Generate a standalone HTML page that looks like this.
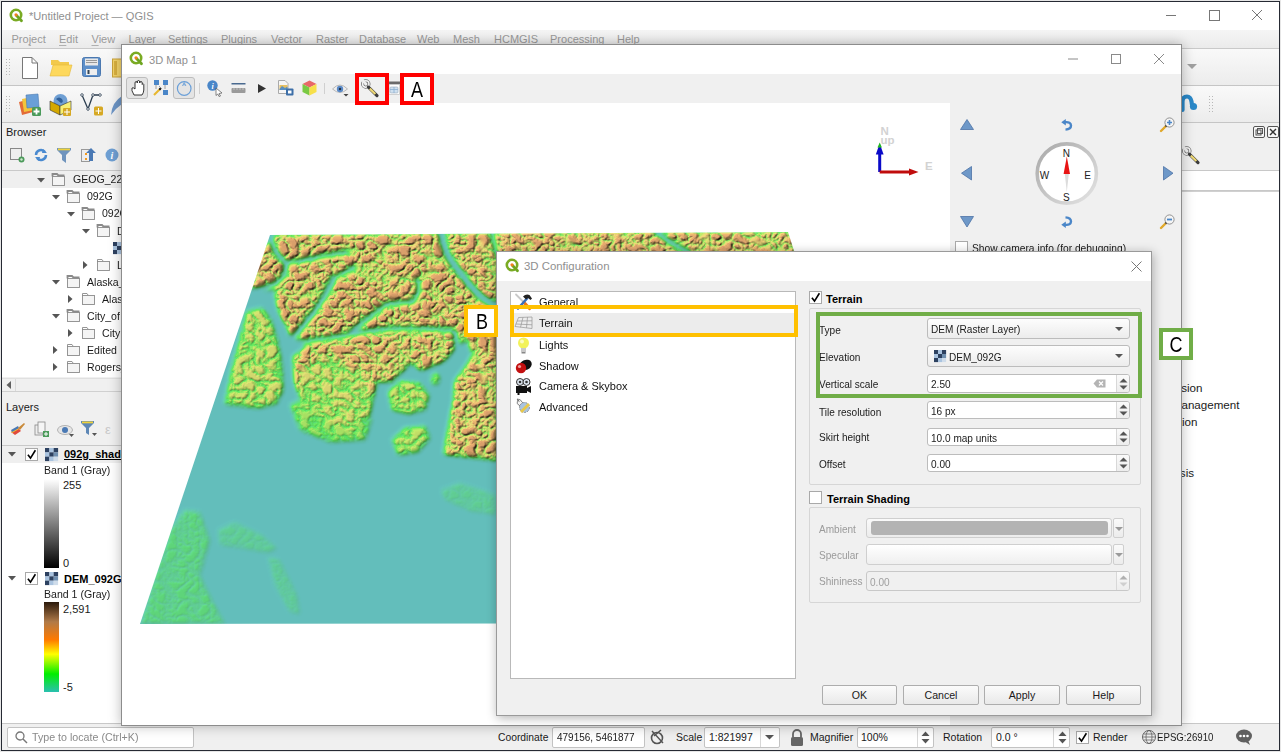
<!DOCTYPE html>
<html><head><meta charset="utf-8"><style>
html,body{margin:0;padding:0;}
body{width:1281px;height:752px;position:relative;overflow:hidden;background:#dedede;font-family:"Liberation Sans", sans-serif;}
div{position:absolute;box-sizing:border-box;}
svg{overflow:visible;}
</style></head><body>
<div style="left:0px;top:0px;width:1281px;height:752px;background:#e6e6e6;"></div>
<div style="left:1px;top:1px;width:1279px;height:750px;background:#f0f0f0;border:1px solid #262a33;"></div>
<div style="left:2px;top:2px;width:1277px;height:28px;background:#fff;"></div>
<svg style="position:absolute;left:9px;top:8px;" width="15" height="15" viewBox="0 0 15 15"><g transform="scale(1.0)">
<circle cx="7" cy="7" r="5.2" fill="none" stroke="#7aab23" stroke-width="2.6"/>
<line x1="7.5" y1="7.5" x2="12.5" y2="12.8" stroke="#6ea520" stroke-width="2.8" stroke-linecap="round"/>
<circle cx="7" cy="6.8" r="1.6" fill="#f07f1e"/></g></svg>
<div style="left:29px;top:8.0px;font-size:11.1px;line-height:16px;color:#8f8f8f;white-space:nowrap;">*Untitled Project — QGIS</div>
<svg style="position:absolute;left:1160px;top:8px;" width="110" height="16" viewBox="0 0 110 16"><line x1="6" y1="7.5" x2="16" y2="7.5" stroke="#777" stroke-width="1"/>
<rect x="49.5" y="2.5" width="10" height="10" fill="none" stroke="#777" stroke-width="1"/>
<path d="M92 2 L102 12 M102 2 L92 12" stroke="#777" stroke-width="1"/></svg>
<div style="left:2px;top:30px;width:1277px;height:19px;background:linear-gradient(#f5f5f5,#ebebeb);border-bottom:1px solid #c9c9c9;"></div>
<div style="left:11.5px;top:32.0px;font-size:11px;line-height:15px;color:#9a9a9a;white-space:nowrap;">Pro<u style="text-decoration-color:#b0b0b0;text-underline-offset:1.5px;">j</u>ect</div>
<div style="left:59px;top:32.0px;font-size:11px;line-height:15px;color:#9a9a9a;white-space:nowrap;"><u style="text-decoration-color:#b0b0b0;text-underline-offset:1.5px;">E</u>dit</div>
<div style="left:91.5px;top:32.0px;font-size:11px;line-height:15px;color:#9a9a9a;white-space:nowrap;"><u style="text-decoration-color:#b0b0b0;text-underline-offset:1.5px;">V</u>iew</div>
<div style="left:128.5px;top:32.0px;font-size:11px;line-height:15px;color:#9a9a9a;white-space:nowrap;"><u style="text-decoration-color:#b0b0b0;text-underline-offset:1.5px;">L</u>ayer</div>
<div style="left:168px;top:32.0px;font-size:11px;line-height:15px;color:#9a9a9a;white-space:nowrap;"><u style="text-decoration-color:#b0b0b0;text-underline-offset:1.5px;">S</u>ettings</div>
<div style="left:221px;top:32.0px;font-size:11px;line-height:15px;color:#9a9a9a;white-space:nowrap;"><u style="text-decoration-color:#b0b0b0;text-underline-offset:1.5px;">P</u>lugins</div>
<div style="left:271px;top:32.0px;font-size:11px;line-height:15px;color:#9a9a9a;white-space:nowrap;">Vect<u style="text-decoration-color:#b0b0b0;text-underline-offset:1.5px;">o</u>r</div>
<div style="left:316px;top:32.0px;font-size:11px;line-height:15px;color:#9a9a9a;white-space:nowrap;"><u style="text-decoration-color:#b0b0b0;text-underline-offset:1.5px;">R</u>aster</div>
<div style="left:359px;top:32.0px;font-size:11px;line-height:15px;color:#9a9a9a;white-space:nowrap;"><u style="text-decoration-color:#b0b0b0;text-underline-offset:1.5px;">D</u>atabase</div>
<div style="left:417px;top:32.0px;font-size:11px;line-height:15px;color:#9a9a9a;white-space:nowrap;"><u style="text-decoration-color:#b0b0b0;text-underline-offset:1.5px;">W</u>eb</div>
<div style="left:453px;top:32.0px;font-size:11px;line-height:15px;color:#9a9a9a;white-space:nowrap;"><u style="text-decoration-color:#b0b0b0;text-underline-offset:1.5px;">M</u>esh</div>
<div style="left:494px;top:32.0px;font-size:11px;line-height:15px;color:#9a9a9a;white-space:nowrap;">HCMGIS</div>
<div style="left:550px;top:32.0px;font-size:11px;line-height:15px;color:#9a9a9a;white-space:nowrap;">Pro<u style="text-decoration-color:#b0b0b0;text-underline-offset:1.5px;">c</u>essing</div>
<div style="left:617px;top:32.0px;font-size:11px;line-height:15px;color:#9a9a9a;white-space:nowrap;"><u style="text-decoration-color:#b0b0b0;text-underline-offset:1.5px;">H</u>elp</div>
<div style="left:2px;top:49px;width:1277px;height:37px;background:linear-gradient(#f9f9f9,#ececec);border-bottom:1px solid #c5c5c5;"></div>
<div style="left:2px;top:86px;width:1277px;height:37px;background:linear-gradient(#f9f9f9,#ececec);border-bottom:1px solid #c5c5c5;"></div>
<svg style="position:absolute;left:6px;top:59px;" width="6" height="18" viewBox="0 0 6 18"><rect x="0" y="0" width="1" height="1" fill="#b8b8b8"/><rect x="3" y="0" width="1" height="1" fill="#b8b8b8"/><rect x="0" y="3" width="1" height="1" fill="#b8b8b8"/><rect x="3" y="3" width="1" height="1" fill="#b8b8b8"/><rect x="0" y="6" width="1" height="1" fill="#b8b8b8"/><rect x="3" y="6" width="1" height="1" fill="#b8b8b8"/><rect x="0" y="9" width="1" height="1" fill="#b8b8b8"/><rect x="3" y="9" width="1" height="1" fill="#b8b8b8"/><rect x="0" y="12" width="1" height="1" fill="#b8b8b8"/><rect x="3" y="12" width="1" height="1" fill="#b8b8b8"/><rect x="0" y="15" width="1" height="1" fill="#b8b8b8"/><rect x="3" y="15" width="1" height="1" fill="#b8b8b8"/></svg>
<svg style="position:absolute;left:6px;top:96px;" width="6" height="18" viewBox="0 0 6 18"><rect x="0" y="0" width="1" height="1" fill="#b8b8b8"/><rect x="3" y="0" width="1" height="1" fill="#b8b8b8"/><rect x="0" y="3" width="1" height="1" fill="#b8b8b8"/><rect x="3" y="3" width="1" height="1" fill="#b8b8b8"/><rect x="0" y="6" width="1" height="1" fill="#b8b8b8"/><rect x="3" y="6" width="1" height="1" fill="#b8b8b8"/><rect x="0" y="9" width="1" height="1" fill="#b8b8b8"/><rect x="3" y="9" width="1" height="1" fill="#b8b8b8"/><rect x="0" y="12" width="1" height="1" fill="#b8b8b8"/><rect x="3" y="12" width="1" height="1" fill="#b8b8b8"/><rect x="0" y="15" width="1" height="1" fill="#b8b8b8"/><rect x="3" y="15" width="1" height="1" fill="#b8b8b8"/></svg>
<svg style="position:absolute;left:22px;top:57px;" width="16" height="22" viewBox="0 0 16 22"><path d="M0.5 0.5 H10 L15.5 6 V21.5 H0.5 Z" fill="#fff" stroke="#777"/><path d="M10 0.5 V6 H15.5" fill="none" stroke="#777"/></svg>
<svg style="position:absolute;left:50px;top:58px;" width="22" height="19" viewBox="0 0 22 19"><path d="M1 2 H8 L10 4 H19 V7 H1 Z" fill="#f2c94c"/><path d="M3 7 H22 L19 18 H0 Z" fill="#fdd85d" stroke="#e4b93a" stroke-width="0.6"/></svg>
<svg style="position:absolute;left:82px;top:57px;" width="19" height="20" viewBox="0 0 19 20"><rect x="0.5" y="0.5" width="18" height="19" rx="2" fill="#5d8fc9" stroke="#4a78b0"/><rect x="3" y="1.5" width="13" height="7" fill="#e8e8e8"/><rect x="4" y="3" width="11" height="1" fill="#999"/><rect x="4" y="5" width="11" height="1" fill="#999"/><rect x="4" y="12" width="11" height="6" fill="#eee"/><rect x="5.5" y="13" width="2" height="4" fill="#345"/></svg>
<svg style="position:absolute;left:112px;top:58px;" width="10" height="21" viewBox="0 0 10 21"><rect x="0.5" y="1" width="10" height="18" fill="#f4d46a" stroke="#c9a23a"/><rect x="2" y="3" width="3" height="14" fill="#d9b040"/></svg>
<svg style="position:absolute;left:18px;top:93px;" width="24" height="23" viewBox="0 0 24 23"><path d="M1 9 L12 6 L15 19 L4 22 Z" fill="#e36b37"/><path d="M4 6 L14 4 L16 17 L6 19 Z" fill="#f3c53b"/><path d="M8 2 L20 1 L21 14 L9 15 Z" fill="#6a9fd8" stroke="#4a78b0" stroke-width="0.6"/><rect x="14" y="14" width="9" height="9" rx="1.5" fill="#4b9a5a"/><path d="M18.5 15.5 V21.5 M15.5 18.5 H21.5" stroke="#fff" stroke-width="1.8"/></svg>
<svg style="position:absolute;left:49px;top:93px;" width="24" height="23" viewBox="0 0 24 23"><circle cx="11.5" cy="8" r="7" fill="#6f9fd3"/><path d="M7 6 Q10 3 13 6 Q15 9 12 10 Z" fill="#2f5f9a"/><path d="M1 8 L11 13 V22 L1 17 Z" fill="#d4a800" stroke="#333" stroke-width="0.6"/><path d="M11 13 L22 8 V17 L11 22 Z" fill="#f7ef73" stroke="#333" stroke-width="0.6"/><rect x="14" y="15" width="8" height="8" rx="1" fill="#d6a823"/><path d="M18 16 V22 M15 19 H21" stroke="#fff" stroke-width="1"/></svg>
<svg style="position:absolute;left:80px;top:93px;" width="24" height="23" viewBox="0 0 24 23"><path d="M2 2 L8 16 L13 2 H20" fill="none" stroke="#2c3e50" stroke-width="1.3"/><circle cx="2" cy="2" r="1.3" fill="#fff" stroke="#2c3e50" stroke-width="0.8"/><circle cx="13" cy="2" r="1.3" fill="#fff" stroke="#2c3e50" stroke-width="0.8"/><circle cx="20" cy="2" r="1.3" fill="#fff" stroke="#2c3e50" stroke-width="0.8"/><circle cx="8" cy="16" r="1.3" fill="#fff" stroke="#2c3e50" stroke-width="0.8"/><rect x="14" y="13.5" width="9" height="9" rx="1.5" fill="#d6a823"/><path d="M18.5 15 V21 M15.5 18 H21.5" stroke="#fff" stroke-width="1"/></svg>
<svg style="position:absolute;left:110px;top:96px;" width="12" height="20" viewBox="0 0 12 20"><path d="M12 0 Q2 6 1 19 Q6 12 12 8 Z" fill="#6d95c6"/></svg>
<div style="left:2px;top:123px;width:119px;height:270px;background:#f0f0f0;"></div>
<div style="left:6px;top:124.5px;font-size:11px;line-height:15px;color:#1a1a1a;white-space:nowrap;">Browser</div>
<svg style="position:absolute;left:10px;top:148px;" width="15" height="15" viewBox="0 0 15 15"><rect x="0.5" y="0.5" width="11" height="11" fill="#eee" stroke="#888"/><circle cx="11.5" cy="11.5" r="3" fill="#4b9a5a"/><circle cx="11.5" cy="11.5" r="1.2" fill="#cfe8cf"/></svg>
<svg style="position:absolute;left:34px;top:148px;" width="14" height="14" viewBox="0 0 14 14"><path d="M2 7 A5 5 0 0 1 11 4" fill="none" stroke="#4a8ad0" stroke-width="2.5"/><path d="M12 7 A5 5 0 0 1 3 10" fill="none" stroke="#4a8ad0" stroke-width="2.5"/><path d="M9 1 L13 5 L8 5 Z" fill="#4a8ad0"/><path d="M5 13 L1 9 L6 9 Z" fill="#4a8ad0"/></svg>
<svg style="position:absolute;left:57px;top:148px;" width="14" height="15" viewBox="0 0 14 15"><path d="M0 0 H14 V2 L9 7 V15 L5 12 V7 L0 2 Z" fill="#6f94bd"/><rect x="1" y="0.5" width="12" height="1.8" fill="#f0d23a"/></svg>
<svg style="position:absolute;left:81px;top:148px;" width="15" height="14" viewBox="0 0 15 14"><rect x="0.5" y="1.5" width="8" height="12" fill="#eee" stroke="#999"/><rect x="4" y="5" width="2" height="2" fill="#f39a1e"/><rect x="4" y="10" width="2" height="2" fill="#f39a1e"/><path d="M10 0 L15 5 H12 V13 H8 V5 H5 Z" fill="#4a79b4"/></svg>
<svg style="position:absolute;left:105px;top:148px;" width="14" height="14" viewBox="0 0 14 14"><circle cx="7" cy="7" r="6.5" fill="#6e9fd3"/><text x="7" y="11" font-size="10" font-style="italic" font-weight="bold" fill="#fff" text-anchor="middle" font-family="Liberation Serif">i</text></svg>
<div style="left:2px;top:170px;width:119px;height:1px;background:#c9c9c9;"></div>
<div style="left:2px;top:171px;width:119px;height:206px;background:#fff;"></div>
<div style="left:2px;top:171px;width:119px;height:17px;background:#efefef;"></div>
<svg style="position:absolute;left:37px;top:177.5px;" width="8" height="5" viewBox="0 0 8 5"><path d="M0 0 H8 L4 4.5 Z" fill="#555"/></svg>
<svg style="position:absolute;left:52px;top:172.5px;" width="13" height="13" viewBox="0 0 13 13"><rect x="0.5" y="3.5" width="12" height="9" fill="#f4f4f4" stroke="#8a8a8a" stroke-width="0.9"/><path d="M0.5 3.5 V1 H5 L6.5 2.5 H12.5" fill="none" stroke="#8a8a8a" stroke-width="1.8"/></svg>
<div style="left:72.5px;top:172.0px;font-size:11px;line-height:15px;color:#1a1a1a;transform:scaleX(0.96);transform-origin:0 50%;white-space:nowrap;">GEOG_221</div>
<svg style="position:absolute;left:52px;top:194.6px;" width="8" height="5" viewBox="0 0 8 5"><path d="M0 0 H8 L4 4.5 Z" fill="#555"/></svg>
<svg style="position:absolute;left:67px;top:189.6px;" width="13" height="13" viewBox="0 0 13 13"><rect x="0.5" y="3.5" width="12" height="9" fill="#f4f4f4" stroke="#8a8a8a" stroke-width="0.9"/><path d="M0.5 3.5 V1 H5 L6.5 2.5 H12.5" fill="none" stroke="#8a8a8a" stroke-width="1.8"/></svg>
<div style="left:87px;top:189.1px;font-size:11px;line-height:15px;color:#1a1a1a;transform:scaleX(0.96);transform-origin:0 50%;white-space:nowrap;">092G</div>
<svg style="position:absolute;left:67px;top:211.9px;" width="8" height="5" viewBox="0 0 8 5"><path d="M0 0 H8 L4 4.5 Z" fill="#555"/></svg>
<svg style="position:absolute;left:82px;top:206.9px;" width="13" height="13" viewBox="0 0 13 13"><rect x="0.5" y="3.5" width="12" height="9" fill="#f4f4f4" stroke="#8a8a8a" stroke-width="0.9"/><path d="M0.5 3.5 V1 H5 L6.5 2.5 H12.5" fill="none" stroke="#8a8a8a" stroke-width="1.8"/></svg>
<div style="left:102px;top:206.4px;font-size:11px;line-height:15px;color:#1a1a1a;transform:scaleX(0.96);transform-origin:0 50%;white-space:nowrap;">092G</div>
<svg style="position:absolute;left:82px;top:229px;" width="8" height="5" viewBox="0 0 8 5"><path d="M0 0 H8 L4 4.5 Z" fill="#555"/></svg>
<svg style="position:absolute;left:97px;top:224px;" width="13" height="13" viewBox="0 0 13 13"><rect x="0.5" y="3.5" width="12" height="9" fill="#f4f4f4" stroke="#8a8a8a" stroke-width="0.9"/><path d="M0.5 3.5 V1 H5 L6.5 2.5 H12.5" fill="none" stroke="#8a8a8a" stroke-width="1.8"/></svg>
<div style="left:117px;top:223.5px;font-size:11px;line-height:15px;color:#1a1a1a;transform:scaleX(0.96);transform-origin:0 50%;white-space:nowrap;">D</div>
<svg style="position:absolute;left:83px;top:261px;" width="5" height="8" viewBox="0 0 5 8"><path d="M0 0 V8 L4.5 4 Z" fill="#555"/></svg>
<svg style="position:absolute;left:97px;top:258px;" width="13" height="13" viewBox="0 0 13 13"><rect x="0.5" y="3.5" width="12" height="9" fill="#f4f4f4" stroke="#8a8a8a" stroke-width="0.9"/><path d="M0.5 3.5 V1.5 H5 L6 3" fill="none" stroke="#8a8a8a" stroke-width="0.9"/></svg>
<div style="left:117px;top:257.5px;font-size:11px;line-height:15px;color:#1a1a1a;transform:scaleX(0.96);transform-origin:0 50%;white-space:nowrap;">L</div>
<svg style="position:absolute;left:52px;top:280px;" width="8" height="5" viewBox="0 0 8 5"><path d="M0 0 H8 L4 4.5 Z" fill="#555"/></svg>
<svg style="position:absolute;left:67px;top:275px;" width="13" height="13" viewBox="0 0 13 13"><rect x="0.5" y="3.5" width="12" height="9" fill="#f4f4f4" stroke="#8a8a8a" stroke-width="0.9"/><path d="M0.5 3.5 V1 H5 L6.5 2.5 H12.5" fill="none" stroke="#8a8a8a" stroke-width="1.8"/></svg>
<div style="left:87px;top:274.5px;font-size:11px;line-height:15px;color:#1a1a1a;transform:scaleX(0.96);transform-origin:0 50%;white-space:nowrap;">Alaska_</div>
<svg style="position:absolute;left:68px;top:295px;" width="5" height="8" viewBox="0 0 5 8"><path d="M0 0 V8 L4.5 4 Z" fill="#555"/></svg>
<svg style="position:absolute;left:82px;top:292px;" width="13" height="13" viewBox="0 0 13 13"><rect x="0.5" y="3.5" width="12" height="9" fill="#f4f4f4" stroke="#8a8a8a" stroke-width="0.9"/><path d="M0.5 3.5 V1.5 H5 L6 3" fill="none" stroke="#8a8a8a" stroke-width="0.9"/></svg>
<div style="left:102px;top:291.5px;font-size:11px;line-height:15px;color:#1a1a1a;transform:scaleX(0.96);transform-origin:0 50%;white-space:nowrap;">Alas</div>
<svg style="position:absolute;left:52px;top:314px;" width="8" height="5" viewBox="0 0 8 5"><path d="M0 0 H8 L4 4.5 Z" fill="#555"/></svg>
<svg style="position:absolute;left:67px;top:309px;" width="13" height="13" viewBox="0 0 13 13"><rect x="0.5" y="3.5" width="12" height="9" fill="#f4f4f4" stroke="#8a8a8a" stroke-width="0.9"/><path d="M0.5 3.5 V1 H5 L6.5 2.5 H12.5" fill="none" stroke="#8a8a8a" stroke-width="1.8"/></svg>
<div style="left:87px;top:308.5px;font-size:11px;line-height:15px;color:#1a1a1a;transform:scaleX(0.96);transform-origin:0 50%;white-space:nowrap;">City_of</div>
<svg style="position:absolute;left:68px;top:329px;" width="5" height="8" viewBox="0 0 5 8"><path d="M0 0 V8 L4.5 4 Z" fill="#555"/></svg>
<svg style="position:absolute;left:82px;top:326px;" width="13" height="13" viewBox="0 0 13 13"><rect x="0.5" y="3.5" width="12" height="9" fill="#f4f4f4" stroke="#8a8a8a" stroke-width="0.9"/><path d="M0.5 3.5 V1.5 H5 L6 3" fill="none" stroke="#8a8a8a" stroke-width="0.9"/></svg>
<div style="left:102px;top:325.5px;font-size:11px;line-height:15px;color:#1a1a1a;transform:scaleX(0.96);transform-origin:0 50%;white-space:nowrap;">City</div>
<svg style="position:absolute;left:53px;top:346px;" width="5" height="8" viewBox="0 0 5 8"><path d="M0 0 V8 L4.5 4 Z" fill="#555"/></svg>
<svg style="position:absolute;left:67px;top:343px;" width="13" height="13" viewBox="0 0 13 13"><rect x="0.5" y="3.5" width="12" height="9" fill="#f4f4f4" stroke="#8a8a8a" stroke-width="0.9"/><path d="M0.5 3.5 V1.5 H5 L6 3" fill="none" stroke="#8a8a8a" stroke-width="0.9"/></svg>
<div style="left:87px;top:342.5px;font-size:11px;line-height:15px;color:#1a1a1a;transform:scaleX(0.96);transform-origin:0 50%;white-space:nowrap;">Edited</div>
<svg style="position:absolute;left:53px;top:363px;" width="5" height="8" viewBox="0 0 5 8"><path d="M0 0 V8 L4.5 4 Z" fill="#555"/></svg>
<svg style="position:absolute;left:67px;top:360px;" width="13" height="13" viewBox="0 0 13 13"><rect x="0.5" y="3.5" width="12" height="9" fill="#f4f4f4" stroke="#8a8a8a" stroke-width="0.9"/><path d="M0.5 3.5 V1.5 H5 L6 3" fill="none" stroke="#8a8a8a" stroke-width="0.9"/></svg>
<div style="left:87px;top:359.5px;font-size:11px;line-height:15px;color:#1a1a1a;transform:scaleX(0.96);transform-origin:0 50%;white-space:nowrap;">Rogers_</div>
<svg style="position:absolute;left:113px;top:242px;" width="12" height="12" viewBox="0 0 12 12"><rect x="0.00" y="0.00" width="4.10" height="4.10" fill="#2d4160"/><rect x="4.00" y="0.00" width="4.10" height="4.10" fill="#a9c3df"/><rect x="8.00" y="0.00" width="4.10" height="4.10" fill="#2d4160"/><rect x="0.00" y="4.00" width="4.10" height="4.10" fill="#a9c3df"/><rect x="4.00" y="4.00" width="4.10" height="4.10" fill="#2d4160"/><rect x="8.00" y="4.00" width="4.10" height="4.10" fill="#6f8fb0"/><rect x="0.00" y="8.00" width="4.10" height="4.10" fill="#2d4160"/><rect x="4.00" y="8.00" width="4.10" height="4.10" fill="#a9c3df"/><rect x="8.00" y="8.00" width="4.10" height="4.10" fill="#cfdcea"/></svg>
<div style="left:2px;top:378px;width:119px;height:14px;background:#f0f0f0;border-top:1px solid #e0e0e0;border-bottom:1px solid #d0d0d0;"></div>
<svg style="position:absolute;left:6px;top:381px;" width="6" height="8" viewBox="0 0 6 8"><path d="M5 0 V8 L0.5 4 Z" fill="#606060"/></svg>
<div style="left:15px;top:379px;width:1px;height:12px;background:#dadada;"></div>
<div style="left:2px;top:393px;width:119px;height:330px;background:#f0f0f0;"></div>
<div style="left:6px;top:399.5px;font-size:11px;line-height:15px;color:#1a1a1a;white-space:nowrap;">Layers</div>
<svg style="position:absolute;left:10px;top:422px;" width="15" height="15" viewBox="0 0 15 15"><path d="M1 10 L8 6 L11 9 L5 13 Z" fill="#e24a3b"/><path d="M1 10 L8 6 L9 7 L2 11 Z" fill="#f4c430"/><path d="M1 8 L8 4 L9 6 L2 10 Z" fill="#4a79b4"/><path d="M8 6 L14 1 L15 2 L10 8 Z" fill="#c98a3a"/></svg>
<svg style="position:absolute;left:34px;top:421px;" width="15" height="16" viewBox="0 0 15 16"><rect x="1" y="4" width="8" height="10" fill="#eee" stroke="#888" stroke-width="0.8"/><rect x="4" y="1" width="7" height="11" fill="#f5f5f5" stroke="#888" stroke-width="0.8"/><rect x="9" y="10" width="6" height="6" fill="#4b9a5a"/><path d="M12 11 V15 M10 13 H14" stroke="#fff" stroke-width="1"/></svg>
<svg style="position:absolute;left:57px;top:424px;" width="17" height="13" viewBox="0 0 17 13"><ellipse cx="8" cy="6" rx="7.5" ry="4.5" fill="#e6e6e6" stroke="#999" stroke-width="0.7"/><circle cx="8" cy="6" r="3" fill="#4a79b4"/><path d="M12 10 H17 L14.5 13 Z" fill="#555"/></svg>
<svg style="position:absolute;left:81px;top:421px;" width="16" height="16" viewBox="0 0 16 16"><path d="M0 0 H13 V2 L8 7 V14 L5 12 V7 L0 2 Z" fill="#5d87b6"/><rect x="1" y="0.5" width="11" height="1.8" fill="#f0d23a"/><path d="M11 12 H16 L13.5 15 Z" fill="#555"/></svg>
<div style="left:105px;top:421.0px;font-size:13px;line-height:18px;color:#c8c8c8;white-space:nowrap;">ε</div>
<div style="left:2px;top:445px;width:119px;height:1px;background:#c9c9c9;"></div>
<div style="left:2px;top:446px;width:119px;height:277px;background:#fff;"></div>
<div style="left:2px;top:446px;width:119px;height:17px;background:#efefef;"></div>
<svg style="position:absolute;left:8px;top:452px;" width="8" height="5" viewBox="0 0 8 5"><path d="M0 0 H8 L4 4.5 Z" fill="#555"/></svg>
<svg style="position:absolute;left:25px;top:448px;" width="13" height="13" viewBox="0 0 13 13"><rect x="0.5" y="0.5" width="12" height="12" fill="#fff" stroke="#a9a9a9"/><path d="M2.9 6.8 L5.5 10.1 L10.4 2.3" fill="none" stroke="#000" stroke-width="1.6"/></svg>
<svg style="position:absolute;left:45px;top:448px;" width="13" height="13" viewBox="0 0 13 13"><rect x="0.00" y="0.00" width="4.43" height="4.43" fill="#2d4160"/><rect x="4.33" y="0.00" width="4.43" height="4.43" fill="#a9c3df"/><rect x="8.67" y="0.00" width="4.43" height="4.43" fill="#2d4160"/><rect x="0.00" y="4.33" width="4.43" height="4.43" fill="#a9c3df"/><rect x="4.33" y="4.33" width="4.43" height="4.43" fill="#2d4160"/><rect x="8.67" y="4.33" width="4.43" height="4.43" fill="#6f8fb0"/><rect x="0.00" y="8.67" width="4.43" height="4.43" fill="#2d4160"/><rect x="4.33" y="8.67" width="4.43" height="4.43" fill="#a9c3df"/><rect x="8.67" y="8.67" width="4.43" height="4.43" fill="#cfdcea"/></svg>
<div style="left:64px;top:447.0px;font-size:11px;line-height:15px;color:#000;font-weight:bold;white-space:nowrap;"><u>092g_shade</u></div>
<div style="left:44px;top:463.0px;font-size:11px;line-height:15px;color:#1a1a1a;transform:scaleX(0.96);transform-origin:0 50%;white-space:nowrap;">Band 1 (Gray)</div>
<div style="left:44px;top:479px;width:15px;height:89px;background:linear-gradient(#ffffff,#000000);"></div>
<div style="left:63px;top:477.5px;font-size:11px;line-height:15px;color:#1a1a1a;white-space:nowrap;">255</div>
<div style="left:63px;top:555.5px;font-size:11px;line-height:15px;color:#1a1a1a;white-space:nowrap;">0</div>
<svg style="position:absolute;left:8px;top:576px;" width="8" height="5" viewBox="0 0 8 5"><path d="M0 0 H8 L4 4.5 Z" fill="#555"/></svg>
<svg style="position:absolute;left:25px;top:572px;" width="13" height="13" viewBox="0 0 13 13"><rect x="0.5" y="0.5" width="12" height="12" fill="#fff" stroke="#a9a9a9"/><path d="M2.9 6.8 L5.5 10.1 L10.4 2.3" fill="none" stroke="#000" stroke-width="1.6"/></svg>
<svg style="position:absolute;left:45px;top:572px;" width="13" height="13" viewBox="0 0 13 13"><rect x="0.00" y="0.00" width="4.43" height="4.43" fill="#2d4160"/><rect x="4.33" y="0.00" width="4.43" height="4.43" fill="#a9c3df"/><rect x="8.67" y="0.00" width="4.43" height="4.43" fill="#2d4160"/><rect x="0.00" y="4.33" width="4.43" height="4.43" fill="#a9c3df"/><rect x="4.33" y="4.33" width="4.43" height="4.43" fill="#2d4160"/><rect x="8.67" y="4.33" width="4.43" height="4.43" fill="#6f8fb0"/><rect x="0.00" y="8.67" width="4.43" height="4.43" fill="#2d4160"/><rect x="4.33" y="8.67" width="4.43" height="4.43" fill="#a9c3df"/><rect x="8.67" y="8.67" width="4.43" height="4.43" fill="#cfdcea"/></svg>
<div style="left:64px;top:571.5px;font-size:11px;line-height:15px;color:#000;font-weight:bold;white-space:nowrap;">DEM_092G</div>
<div style="left:44px;top:586.5px;font-size:11px;line-height:15px;color:#1a1a1a;transform:scaleX(0.96);transform-origin:0 50%;white-space:nowrap;">Band 1 (Gray)</div>
<div style="left:44px;top:602px;width:15px;height:90px;background:linear-gradient(#2b1a0c 0%,#b07a48 22%,#ff7a00 42%,#ffff00 58%,#00ee00 80%,#2ac0b0 100%);"></div>
<div style="left:63px;top:601.5px;font-size:11px;line-height:15px;color:#1a1a1a;white-space:nowrap;">2,591</div>
<div style="left:63px;top:679.5px;font-size:11px;line-height:15px;color:#1a1a1a;white-space:nowrap;">-5</div>
<div style="left:2px;top:723px;width:1277px;height:1px;background:#c8c8c8;"></div>
<div style="left:1181px;top:123px;width:98px;height:600px;background:#f0f0f0;"></div>
<svg style="position:absolute;left:1253px;top:126px;" width="26" height="12" viewBox="0 0 26 12"><rect x="0.5" y="0.5" width="11" height="11" rx="1.5" fill="#f8f8f8" stroke="#555"/><rect x="3" y="4" width="5" height="5" fill="none" stroke="#555"/><rect x="4.5" y="2.5" width="5" height="5" fill="none" stroke="#555"/><rect x="14.5" y="0.5" width="11" height="11" rx="1.5" fill="#f8f8f8" stroke="#555"/><path d="M17 3 L23 9 M23 3 L17 9" stroke="#333" stroke-width="1.4"/></svg>
<svg style="position:absolute;left:1182px;top:146px;" width="19" height="19" viewBox="0 0 19 19"><circle cx="4.8" cy="5" r="3.2" fill="none" stroke="#6a6a6a" stroke-width="3"/><circle cx="4.8" cy="5" r="3.2" fill="none" stroke="#f4f4f4" stroke-width="1.5"/><path d="M0 1.6 L3.6 5.2 L5.4 3.4 L1.8 -0.2 Z" fill="#f0f0f0"/><path d="M7.4 8.2 L16 16.6" stroke="#3c3c3c" stroke-width="3.2" stroke-linecap="round"/><path d="M8.8 9.6 L14.4 15" stroke="#ecd775" stroke-width="2.2"/></svg>
<div style="left:1181px;top:170px;width:98px;height:21px;background:#fff;border:1px solid #c8c8c8;border-right:none;"></div>
<div style="left:1181px;top:191px;width:98px;height:532px;background:#fff;border-top:1px solid #d0d0d0;"></div>
<svg style="position:absolute;left:1187px;top:64px;" width="10" height="5" viewBox="0 0 10 5"><path d="M0 0 H10 L5 5 Z" fill="#a0a0a0"/></svg>
<svg style="position:absolute;left:1180px;top:94px;" width="18" height="18" viewBox="0 0 18 18"><path d="M2.5 16 V8 Q2.5 2.5 7 2.5 Q10.5 2.5 11.5 7.5 L12 11" fill="none" stroke="#2a88c8" stroke-width="4.2" stroke-linecap="round"/><circle cx="13.5" cy="12.5" r="3.6" fill="#2a88c8"/></svg>
<svg style="position:absolute;left:1209px;top:96px;" width="6" height="18" viewBox="0 0 6 18"><rect x="0" y="0" width="1" height="1" fill="#b8b8b8"/><rect x="3" y="0" width="1" height="1" fill="#b8b8b8"/><rect x="0" y="3" width="1" height="1" fill="#b8b8b8"/><rect x="3" y="3" width="1" height="1" fill="#b8b8b8"/><rect x="0" y="6" width="1" height="1" fill="#b8b8b8"/><rect x="3" y="6" width="1" height="1" fill="#b8b8b8"/><rect x="0" y="9" width="1" height="1" fill="#b8b8b8"/><rect x="3" y="9" width="1" height="1" fill="#b8b8b8"/><rect x="0" y="12" width="1" height="1" fill="#b8b8b8"/><rect x="3" y="12" width="1" height="1" fill="#b8b8b8"/><rect x="0" y="15" width="1" height="1" fill="#b8b8b8"/><rect x="3" y="15" width="1" height="1" fill="#b8b8b8"/></svg>
<div style="left:902.5px;top:379.8px;width:300px;text-align:right;font-size:11.6px;line-height:16px;color:#1a1a1a;white-space:nowrap;">Conversion</div>
<div style="left:939.5px;top:396.8px;width:300px;text-align:right;font-size:11.6px;line-height:16px;color:#1a1a1a;white-space:nowrap;">Data management</div>
<div style="left:897.5px;top:413.8px;width:300px;text-align:right;font-size:11.6px;line-height:16px;color:#1a1a1a;white-space:nowrap;">Interpolation</div>
<div style="left:894px;top:464.8px;width:300px;text-align:right;font-size:11.6px;line-height:16px;color:#1a1a1a;white-space:nowrap;">Analysis</div>
<div style="left:2px;top:724px;width:1277px;height:26px;background:#f0f0f0;"></div>
<div style="left:7px;top:727px;width:187px;height:21px;background:#fff;border:1px solid #c3c3c3;border-radius:2px;"></div>
<svg style="position:absolute;left:15px;top:731px;" width="13" height="13" viewBox="0 0 13 13"><circle cx="5" cy="5" r="4" fill="none" stroke="#777" stroke-width="1.3"/><path d="M8 8 L12 12" stroke="#777" stroke-width="1.5"/></svg>
<div style="left:32px;top:730.0px;font-size:11px;line-height:15px;color:#8a8a8a;transform:scaleX(0.97);transform-origin:0 50%;white-space:nowrap;">Type to locate (Ctrl+K)</div>
<div style="left:498px;top:730.5px;font-size:10.3px;line-height:14px;color:#1a1a1a;white-space:nowrap;">Coordinate</div>
<div style="left:552px;top:727px;width:93px;height:21px;background:#fff;border:1px solid #c3c3c3;border-radius:2px;"></div>
<div style="left:557px;top:730.0px;font-size:10.5px;line-height:15px;color:#1a1a1a;transform:scaleX(0.95);transform-origin:0 50%;white-space:nowrap;">479156, 5461877</div>
<svg style="position:absolute;left:649px;top:728px;" width="17" height="18" viewBox="0 0 17 18"><circle cx="8" cy="10" r="5.5" fill="none" stroke="#555" stroke-width="1.6"/><path d="M3 3 L14 15 M12 2 L5 8" stroke="#555" stroke-width="1.4"/></svg>
<div style="left:676px;top:730.0px;font-size:10.5px;line-height:15px;color:#1a1a1a;white-space:nowrap;">Scale</div>
<div style="left:704px;top:727px;width:76px;height:21px;background:#fff;border:1px solid #c3c3c3;border-radius:2px;"></div>
<div style="left:760px;top:728px;width:1px;height:19px;background:#d8d8d8;"></div>
<div style="left:709px;top:730.0px;font-size:10.5px;line-height:15px;color:#1a1a1a;white-space:nowrap;">1:821997</div>
<svg style="position:absolute;left:765px;top:735px;" width="9" height="5" viewBox="0 0 9 5"><path d="M0 0 H9 L4.5 4.5 Z" fill="#555"/></svg>
<svg style="position:absolute;left:790px;top:729px;" width="14" height="17" viewBox="0 0 14 17"><path d="M3 8 V5 A4 4 0 0 1 11 5 V8" fill="none" stroke="#666" stroke-width="1.8"/><rect x="1" y="8" width="12" height="9" rx="1.5" fill="#666"/></svg>
<div style="left:810px;top:730.0px;font-size:10.5px;line-height:15px;color:#1a1a1a;white-space:nowrap;">Magnifier</div>
<div style="left:857px;top:727px;width:77px;height:21px;background:#fff;border:1px solid #c3c3c3;border-radius:2px;"></div>
<div style="left:917px;top:728px;width:1px;height:19px;background:#d8d8d8;"></div>
<div style="left:861px;top:730.0px;font-size:10.5px;line-height:15px;color:#1a1a1a;white-space:nowrap;">100%</div>
<svg style="position:absolute;left:921px;top:731px;" width="9" height="13" viewBox="0 0 9 13"><path d="M0.5 5 L4.5 0.5 L8.5 5 Z" fill="#555"/><path d="M0.5 8 L4.5 12.5 L8.5 8 Z" fill="#555"/></svg>
<div style="left:943px;top:730.0px;font-size:10.5px;line-height:15px;color:#1a1a1a;white-space:nowrap;">Rotation</div>
<div style="left:991px;top:727px;width:79px;height:21px;background:#fff;border:1px solid #c3c3c3;border-radius:2px;"></div>
<div style="left:1053px;top:728px;width:1px;height:19px;background:#d8d8d8;"></div>
<div style="left:996px;top:730.0px;font-size:10.5px;line-height:15px;color:#1a1a1a;white-space:nowrap;">0.0 °</div>
<svg style="position:absolute;left:1058px;top:731px;" width="9" height="13" viewBox="0 0 9 13"><path d="M0.5 5 L4.5 0.5 L8.5 5 Z" fill="#555"/><path d="M0.5 8 L4.5 12.5 L8.5 8 Z" fill="#555"/></svg>
<svg style="position:absolute;left:1076px;top:731px;" width="13" height="13" viewBox="0 0 13 13"><rect x="0.5" y="0.5" width="12" height="12" fill="#fff" stroke="#a9a9a9"/><path d="M2.9 6.8 L5.5 10.1 L10.4 2.3" fill="none" stroke="#000" stroke-width="1.6"/></svg>
<div style="left:1093px;top:730.0px;font-size:10.5px;line-height:15px;color:#1a1a1a;white-space:nowrap;">Render</div>
<svg style="position:absolute;left:1141px;top:729px;" width="16" height="16" viewBox="0 0 16 16"><circle cx="8" cy="8" r="6.5" fill="none" stroke="#666" stroke-width="1"/><ellipse cx="8" cy="8" rx="3" ry="6.5" fill="none" stroke="#666" stroke-width="0.8"/><path d="M1.5 8 H14.5 M2.5 5 H13.5 M2.5 11 H13.5" stroke="#666" stroke-width="0.8"/></svg>
<div style="left:1157px;top:730.0px;font-size:10.5px;line-height:15px;color:#1a1a1a;transform:scaleX(0.92);transform-origin:0 50%;white-space:nowrap;">EPSG:26910</div>
<svg style="position:absolute;left:1236px;top:729px;" width="17" height="16" viewBox="0 0 17 16"><ellipse cx="8" cy="7" rx="8" ry="6.5" fill="#606060"/><path d="M8 12 L14 16 L12 11 Z" fill="#606060"/><circle cx="4.5" cy="7" r="1.3" fill="#fff"/><circle cx="8" cy="7" r="1.3" fill="#fff"/><circle cx="11.5" cy="7" r="1.3" fill="#fff"/></svg>
<div style="left:121px;top:44px;width:1061px;height:682px;background:#f0f0f0;border:1px solid #8c8c8c;box-shadow:0 0 12px rgba(0,0,0,0.28);"></div>
<div style="left:122px;top:45px;width:1059px;height:29px;background:#fff;"></div>
<svg style="position:absolute;left:129px;top:51px;" width="15" height="15" viewBox="0 0 15 15"><g transform="scale(1.0)">
<circle cx="7" cy="7" r="5.2" fill="none" stroke="#7aab23" stroke-width="2.6"/>
<line x1="7.5" y1="7.5" x2="12.5" y2="12.8" stroke="#6ea520" stroke-width="2.8" stroke-linecap="round"/>
<circle cx="7" cy="6.8" r="1.6" fill="#f07f1e"/></g></svg>
<div style="left:149px;top:51.5px;font-size:11.1px;line-height:16px;color:#8f8f8f;white-space:nowrap;">3D Map 1</div>
<svg style="position:absolute;left:1061px;top:50px;" width="110" height="18" viewBox="0 0 110 18"><line x1="7" y1="9" x2="17" y2="9" stroke="#8a8a8a"/><rect x="50.5" y="4.5" width="9" height="9" fill="none" stroke="#8a8a8a"/><path d="M93 4 L103 14 M103 4 L93 14" stroke="#8a8a8a"/></svg>
<div style="left:122px;top:74px;width:1059px;height:29px;background:#f0f0f0;"></div>
<div style="left:122px;top:103px;width:828px;height:622px;background:#fff;"></div>
<div style="left:950px;top:103px;width:231px;height:622px;background:#f0f0f0;"></div>
<div style="left:126px;top:77px;width:22px;height:22px;background:#e4e4e4;border:1px solid #bdbdbd;border-radius:3px;"></div>
<svg style="position:absolute;left:131px;top:80px;" width="13" height="16" viewBox="0 0 13 16"><path d="M3 15 Q0 10 1 8 Q2 7 4 9 V3 Q4 1.5 5.2 1.5 Q6.3 1.5 6.3 3 V2 Q6.3 0.5 7.5 0.5 Q8.7 0.5 8.7 2 V3 Q8.8 1.5 10 1.5 Q11.2 1.5 11.2 3 V4.5 Q11.5 3.5 12.2 3.8 Q13 4 12.8 6 V10 Q12.6 13 11 15 Z" fill="#fff" stroke="#222" stroke-width="0.9"/></svg>
<svg style="position:absolute;left:153px;top:80px;" width="16" height="16" viewBox="0 0 16 16"><rect x="1" y="0" width="5" height="5" fill="#4a86c8"/><rect x="10" y="0" width="5" height="5" fill="#4a86c8"/><rect x="10" y="10" width="5" height="5" fill="#4a86c8"/><path d="M6 6 L9 9 M3 5 V9 M12 5 V9" stroke="#888" stroke-width="0.8"/><path d="M1 15 L7 9" stroke="#e8b830" stroke-width="2.2"/><circle cx="7" cy="9" r="1.2" fill="#222"/></svg>
<div style="left:173px;top:77px;width:22px;height:22px;background:#e4e4e4;border:1px solid #bdbdbd;border-radius:3px;"></div>
<svg style="position:absolute;left:176px;top:80px;" width="17" height="17" viewBox="0 0 17 17"><circle cx="8.2" cy="8.5" r="6.8" fill="none" stroke="#6a9fd8" stroke-width="1.2"/><path d="M6.5 6 L8.2 2.5 L9.9 6 M7.2 4.8 H9.2" fill="none" stroke="#6a9fd8" stroke-width="0.9"/></svg>
<div style="left:199px;top:83px;width:1px;height:11px;background:#d0d0d0;"></div>
<svg style="position:absolute;left:207px;top:80px;" width="16" height="16" viewBox="0 0 16 16"><circle cx="5.5" cy="5.5" r="5.2" fill="#4a86c8"/><text x="5.5" y="9" font-size="8" font-weight="bold" font-style="italic" fill="#fff" text-anchor="middle" font-family="Liberation Serif">i</text><path d="M9 8 L15 13 L12 13.5 L13.5 16 L12 16.5 L10.8 14 L9 15.5 Z" fill="#fff" stroke="#555" stroke-width="0.7"/></svg>
<svg style="position:absolute;left:231px;top:82px;" width="15" height="13" viewBox="0 0 15 13"><rect x="0.5" y="1" width="14" height="1.5" fill="#4a6a90"/><rect x="0.5" y="6" width="14" height="5" rx="1" fill="#9a9a9a"/><path d="M3 6 V8 M6 6 V8 M9 6 V8 M12 6 V8" stroke="#ddd" stroke-width="0.6"/></svg>
<svg style="position:absolute;left:258px;top:84px;" width="8" height="9" viewBox="0 0 8 9"><path d="M0 0 L8 4.5 L0 9 Z" fill="#333"/></svg>
<svg style="position:absolute;left:278px;top:80px;" width="16" height="16" viewBox="0 0 16 16"><path d="M0.5 0.5 H7 L10 3.5 V13.5 H0.5 Z" fill="#f6f6f6" stroke="#aaa"/><rect x="1.5" y="5" width="8" height="5" fill="#e8c060"/><path d="M1.5 9 L4 6 L7 8 L9.5 6.5 V10 H1.5 Z" fill="#5a8fc0"/><rect x="8" y="8.5" width="7.5" height="7" rx="1" fill="#3d6fa8"/><rect x="10" y="10.5" width="3.5" height="3" fill="#fff"/></svg>
<svg style="position:absolute;left:302px;top:80px;" width="15" height="16" viewBox="0 0 15 16"><path d="M7.5 0.5 L14.5 4 L7.5 7.5 L0.5 4 Z" fill="#e86868"/><path d="M0.5 4 L7.5 7.5 V15.5 L0.5 12 Z" fill="#7ac943"/><path d="M14.5 4 L7.5 7.5 V15.5 L14.5 12 Z" fill="#f7e04a"/></svg>
<div style="left:324px;top:83px;width:1px;height:11px;background:#d0d0d0;"></div>
<svg style="position:absolute;left:332px;top:83px;" width="17" height="14" viewBox="0 0 17 14"><path d="M0.5 6 Q8 -2 15.5 6 Q8 13 0.5 6 Z" fill="#eee" stroke="#aaa" stroke-width="0.8"/><circle cx="8" cy="6" r="3.2" fill="#5a8ac8"/><circle cx="8" cy="6" r="1.2" fill="#234"/><path d="M11.5 11 H16.5 L14 13.5 Z" fill="#444"/></svg>
<svg style="position:absolute;left:361px;top:79px;" width="19" height="19" viewBox="0 0 19 19"><circle cx="4.8" cy="5" r="3.2" fill="none" stroke="#6a6a6a" stroke-width="3"/><circle cx="4.8" cy="5" r="3.2" fill="none" stroke="#f4f4f4" stroke-width="1.5"/><path d="M0 1.6 L3.6 5.2 L5.4 3.4 L1.8 -0.2 Z" fill="#efefef"/><path d="M7.4 8.2 L16 16.6" stroke="#3c3c3c" stroke-width="3.2" stroke-linecap="round"/><path d="M8.8 9.6 L14.4 15" stroke="#ecd775" stroke-width="2.2"/></svg>
<svg style="position:absolute;left:389px;top:81px;" width="11" height="15" viewBox="0 0 11 15"><rect x="0" y="0.5" width="11" height="3" fill="#6a6a6a"/><rect x="0" y="3.5" width="10.5" height="10" fill="#fff" stroke="#c8c8c8" stroke-width="0.8"/><rect x="1" y="6" width="8" height="6" rx="1" fill="#cfe0f0" stroke="#9ab" stroke-width="0.6"/><path d="M1 8.5 H9 M5 6 V12" stroke="#8aaed0" stroke-width="0.8"/></svg>
<svg style="position:absolute;left:960px;top:119px;" width="14" height="11" viewBox="0 0 14 11"><path d="M7 0.5 L13.5 10.5 H0.5 Z" fill="#6e98c8" stroke="#4c72a6" stroke-width="0.8"/></svg>
<svg style="position:absolute;left:961px;top:166px;" width="11" height="15" viewBox="0 0 11 15"><path d="M10.5 0.5 V14 L0.5 7.2 Z" fill="#6e98c8" stroke="#4c72a6" stroke-width="0.8"/></svg>
<svg style="position:absolute;left:960px;top:216px;" width="14" height="12" viewBox="0 0 14 12"><path d="M0.5 0.5 H13.5 L7 11 Z" fill="#6e98c8" stroke="#4c72a6" stroke-width="0.8"/></svg>
<svg style="position:absolute;left:1163px;top:166px;" width="11" height="15" viewBox="0 0 11 15"><path d="M0.5 0.5 V14 L10 7.2 Z" fill="#6e98c8" stroke="#4c72a6" stroke-width="0.8"/></svg>
<svg style="position:absolute;left:1061px;top:119px;" width="12" height="12" viewBox="0 0 12 12"><path d="M4 3.2 Q9.8 2.6 10 6.5 Q10 10.2 4.5 10.6" fill="none" stroke="#4a86c8" stroke-width="2.4"/><path d="M0.3 3.2 L4.8 0 V6.4 Z" fill="#4a86c8"/></svg>
<svg style="position:absolute;left:1061px;top:216px;" width="12" height="12" viewBox="0 0 12 12"><path d="M4 8.8 Q9.8 9.4 10 5.5 Q10 1.8 4.5 1.4" fill="none" stroke="#4a86c8" stroke-width="2.4"/><path d="M0.3 8.8 L4.8 12 V5.6 Z" fill="#4a86c8"/></svg>
<svg style="position:absolute;left:1160px;top:117px;" width="15" height="15" viewBox="0 0 15 15"><path d="M1 14 L6 9" stroke="#e0a82a" stroke-width="2.4" stroke-linecap="round"/><path d="M5.5 9.5 L6.5 8.5" stroke="#333" stroke-width="2"/><circle cx="9.5" cy="5.5" r="4.6" fill="#f4f4f4" stroke="#888" stroke-width="0.9"/><path d="M9.5 3 V8 M7 5.5 H12" stroke="#4a86c8" stroke-width="1.6"/></svg>
<svg style="position:absolute;left:1160px;top:214px;" width="15" height="15" viewBox="0 0 15 15"><path d="M1 14 L6 9" stroke="#e0a82a" stroke-width="2.4" stroke-linecap="round"/><path d="M5.5 9.5 L6.5 8.5" stroke="#333" stroke-width="2"/><circle cx="9.5" cy="5.5" r="4.6" fill="#f4f4f4" stroke="#888" stroke-width="0.9"/><path d="M7 5.5 H12" stroke="#4a86c8" stroke-width="1.8"/></svg>
<svg style="position:absolute;left:1035px;top:142px;" width="64" height="64" viewBox="0 0 64 64"><defs><linearGradient id="cg" x1="0" y1="0" x2="1" y2="1"><stop offset="0" stop-color="#a8a8a8"/><stop offset="1" stop-color="#e4e4e4"/></linearGradient></defs>
<circle cx="31.8" cy="31.5" r="29.6" fill="#fff" stroke="url(#cg)" stroke-width="3.6"/>
<path d="M31.8 14.5 L28.6 32 H35 Z" fill="#e81414"/>
<path d="M29.8 32 L31.8 50 L33.8 32 Z" fill="#dcdcdc"/>
<text x="31.4" y="14.5" font-size="10" text-anchor="middle" fill="#222" font-family="Liberation Sans">N</text>
<text x="31.4" y="58.5" font-size="10" text-anchor="middle" fill="#222" font-family="Liberation Sans">S</text>
<text x="9.5" y="36.5" font-size="10" text-anchor="middle" fill="#222" font-family="Liberation Sans">W</text>
<text x="52.7" y="36.5" font-size="10" text-anchor="middle" fill="#222" font-family="Liberation Sans">E</text></svg>
<svg style="position:absolute;left:955px;top:241px;" width="13" height="13" viewBox="0 0 13 13"><rect x="0.5" y="0.5" width="12" height="12" fill="#fff" stroke="#a9a9a9"/></svg>
<div style="left:972px;top:240.8px;font-size:11px;line-height:15px;color:#1a1a1a;transform:scaleX(0.93);transform-origin:0 50%;white-space:nowrap;">Show camera info (for debugging)</div>
<svg style="position:absolute;left:872px;top:120px;" width="70" height="60" viewBox="0 0 70 60"><text x="8.5" y="15" font-size="11.5" font-weight="bold" fill="#d2d2d2" font-family="Liberation Sans">N</text>
<text x="8.5" y="24" font-size="11.5" font-weight="bold" fill="#d2d2d2" font-family="Liberation Sans">up</text>
<text x="53" y="49.5" font-size="11.5" font-weight="bold" fill="#d2d2d2" font-family="Liberation Sans">E</text>
<path d="M7.7 52 V32" stroke="#0a0ac8" stroke-width="3"/>
<path d="M3.8 34.5 L7.7 23.5 L11.6 34.5 Z" fill="#0a0ac8"/>
<path d="M5.5 27.5 L7.7 22.5 L9.9 27.5 Z" fill="#22b822"/>
<path d="M7.7 52 H39" stroke="#c00c0c" stroke-width="3"/>
<path d="M37 48.5 L46.5 52 L37 55.5 Z" fill="#c00c0c"/></svg>
<svg style="position:absolute;left:122px;top:103px;overflow:hidden;" width="828" height="622" viewBox="0 0 828 622"><defs>
<clipPath id="tclip"><path d="M270,235 L788,232 L797,260 L840,623 L140,624 Z"/></clipPath>
<filter id="dem" x="130" y="225" width="720" height="410" filterUnits="userSpaceOnUse" color-interpolation-filters="sRGB">
 <feGaussianBlur in="SourceGraphic" stdDeviation="2.2" result="mask"/>
 <feTurbulence type="turbulence" baseFrequency="0.09 0.11" numOctaves="4" seed="9" result="tb"/>
 <feColorMatrix in="tb" type="matrix" values="2.5 0 0 0 -0.22  2.5 0 0 0 -0.22  2.5 0 0 0 -0.22  0 0 0 0 1" result="n"/>
 <feComponentTransfer in="mask" result="m2"><feFuncR type="gamma" amplitude="1" exponent="1.7" offset="0"/><feFuncG type="gamma" amplitude="1" exponent="1.7" offset="0"/><feFuncB type="gamma" amplitude="1" exponent="1.7" offset="0"/></feComponentTransfer>
 <feComposite in="n" in2="m2" operator="arithmetic" k1="1" k2="0" k3="0" k4="0" result="c1"/>
 <feComposite in="c1" in2="mask" operator="arithmetic" k1="0" k2="0.56" k3="0.25" k4="0" result="hraw"/>
 <feColorMatrix in="hraw" type="matrix" values="0.81 0 0 0 0  0.81 0 0 0 0  0.81 0 0 0 0  0 0 0 0 1" result="h"/>
 <feComponentTransfer in="h" result="col">
  <feFuncR type="table" tableValues="0.39 0.36 0.74 0.90 0.89 0.85 0.78"/>
  <feFuncG type="table" tableValues="0.75 0.88 0.88 0.82 0.68 0.62 0.62"/>
  <feFuncB type="table" tableValues="0.74 0.36 0.40 0.46 0.42 0.42 0.52"/>
 </feComponentTransfer>
 <feColorMatrix in="h" type="matrix" values="0 0 0 0 0  0 0 0 0 0  0 0 0 0 0  1 0 0 0 0" result="ha"/>
 <feDiffuseLighting in="ha" surfaceScale="2.4" diffuseConstant="1.12" lighting-color="#fff" result="light">
  <feDistantLight azimuth="225" elevation="58"/>
 </feDiffuseLighting>
 <feComposite in="col" in2="light" operator="arithmetic" k1="1.05" k2="0" k3="0" k4="0"/>
</filter>
</defs>
<g transform="translate(-122,-103)" clip-path="url(#tclip)">
<g filter="url(#dem)">
 <rect x="130" y="225" width="720" height="410" fill="#000"/>
 <path d="M141,624 L155,575 L170,530 L185,510 L200,512 L210,540 L200,575 L212,600 L225,624 Z" fill="#404040"/><g fill="#2c2c2c"><path d="M218,530 L235,522 L262,535 L277,548 L268,553 L240,548 L220,545 Z"/><path d="M268,557 L280,560 L297,595 L300,614 L290,612 L275,585 Z"/><path d="M441,490 L460,483 L496,495 L496,515 L470,511 L445,500 Z"/></g>
 <path d="M290,405 L305,398 L330,420 L358,426 L372,418 L365,440 L330,442 L300,430 Z" fill="#808080"/>
 <path d="M273,235 L497,233 L497,338 L466,338.6 L455,347.9 L447.5,329.3 L410.3,327.4 L384.2,329.3 L369.3,334.9 L354,340 L330,343 L305,345 L291,342 L289,331 L279,312 L275,294 L279,288 L262,291 L250,291 L252,270 L264,248 Z" fill="#fff"/>
 <path d="M293,357.2 L307.9,346.1 L341.4,340.5 L369.3,334.9 L384.2,329.3 L410.3,327.4 L447.5,329.3 L455,347.9 L443.8,361 L421.4,370.3 L410.3,362.8 L391.7,381.4 L376.8,381.4 L373,398.2 L369.3,416.8 L358.2,424.2 L341.4,424.2 L317.2,407.5 L300.5,398.2 L294.9,383.3 Z" fill="#f0f0f0"/>
 <path d="M298,368 L330,356 L360,372 L372,390 L370,416 L352,430 L325,420 L302,402 Z" fill="#ababab"/>
 <path d="M466,338.6 L497,336.8 L497,460 L443.8,454 L447.5,431.7 L453.1,403.8 L455,381.4 L466,366.5 L473.6,353.5 Z" fill="#fff"/>
 <path d="M246,312 L262,308 L271,320 L278,342 L282,366 L283,390 L276,404 L258,408 L225,404 L232,368 L240,340 Z" fill="#a4a4a4"/>
 <path d="M388,392 L400,381 L420,383 L429,395 L425,410 L408,414 L392,410 Z" fill="#a0a0a0"/><path d="M392,440 L405,428 L425,426 L430,438 L418,452 L398,455 Z" fill="#909090"/><path d="M431,377 L436,372 L440,378 L437,385 L432,384 Z" fill="#909090"/>
 <path d="M497,232 L792,232 L800,262 L497,262 Z" fill="#fff"/>
 <g fill="none" stroke="#8a8a8a" stroke-width="3.5" stroke-linecap="round">
  <path d="M295,259 Q320,255 344,251"/><path d="M344,275 Q360,270 371,265 Q380,256 387,249 Q393,242 398,238"/>
  <path d="M367,275 Q395,280 416,279 Q428,274 435,269"/><path d="M416,253 Q430,256 445,261"/>
  <path d="M300,300 Q315,292 330,282"/><path d="M480,240 Q485,262 497,275"/>
  <path d="M560,236 Q575,245 585,253"/><path d="M700,233 Q712,245 718,253"/><path d="M745,236 Q762,246 782,252"/>
  <path d="M470,345 Q482,370 490,400"/>
 </g>
 <path d="M271,233 Q271,250 285,262" fill="none" stroke="#000" stroke-width="6" stroke-linecap="round"/><path d="M285,262 Q300,263 320,257 Q335,254 350,252" fill="none" stroke="#000" stroke-width="4.5" stroke-linecap="round"/><path d="M285,262 Q289,272 279,281 Q268,288 250,291" fill="none" stroke="#000" stroke-width="5.5" stroke-linecap="round"/><path d="M334,278 Q326,296 314,312 Q302,328 289,342" fill="none" stroke="#000" stroke-width="6.5" stroke-linecap="round"/><path d="M334,278 Q344,272 356,266" fill="none" stroke="#000" stroke-width="4.5" stroke-linecap="round"/><path d="M351,332 Q370,316 387,304 Q405,302 413,302 Q421,292 418,281" fill="none" stroke="#000" stroke-width="5.5" stroke-linecap="round"/><path d="M441,232 Q444,250 452,262 Q462,275 474,290 Q484,302 497,305" fill="none" stroke="#000" stroke-width="8" stroke-linecap="round"/><path d="M280,344 Q320,340 369,331 Q400,326 450,330" fill="none" stroke="#000" stroke-width="5" stroke-linecap="round"/><path d="M455,332 Q458,345 456,360" fill="none" stroke="#000" stroke-width="6" stroke-linecap="round"/><path d="M655,231 Q668,242 690,253" fill="none" stroke="#000" stroke-width="6" stroke-linecap="round"/><path d="M492,232 Q494,245 497,256" fill="none" stroke="#000" stroke-width="5" stroke-linecap="round"/>
</g>
</g></svg>
<div style="left:496px;top:251px;width:656px;height:465px;background:#f0f0f0;border:1px solid #9a9a9a;box-shadow:1px 2px 10px rgba(0,0,0,0.30);"></div>
<div style="left:497px;top:252px;width:654px;height:29px;background:#fff;"></div>
<svg style="position:absolute;left:505px;top:258px;" width="15" height="15" viewBox="0 0 15 15"><g transform="scale(1.0)">
<circle cx="7" cy="7" r="5.2" fill="none" stroke="#7aab23" stroke-width="2.6"/>
<line x1="7.5" y1="7.5" x2="12.5" y2="12.8" stroke="#6ea520" stroke-width="2.8" stroke-linecap="round"/>
<circle cx="7" cy="6.8" r="1.6" fill="#f07f1e"/></g></svg>
<div style="left:524px;top:258.0px;font-size:11.4px;line-height:16px;color:#8f8f8f;white-space:nowrap;">3D Configuration</div>
<svg style="position:absolute;left:1131px;top:261px;" width="12" height="12" viewBox="0 0 12 12"><path d="M0.5 0.5 L10.5 10.5 M10.5 0.5 L0.5 10.5" stroke="#777" stroke-width="1"/></svg>
<div style="left:510px;top:291px;width:286px;height:388px;background:#fff;border:1px solid #b9b9b9;"></div>
<div style="left:511px;top:313px;width:284px;height:20px;background:#ececec;"></div>
<svg style="position:absolute;left:514px;top:293px;" width="19" height="19" viewBox="0 0 19 19"><path d="M2 1.5 L10 9.5" stroke="#c8c8c8" stroke-width="1.8" stroke-linecap="round"/><path d="M10 9.5 L15.5 15.5" stroke="#f07818" stroke-width="3.2" stroke-linecap="round"/><path d="M13 5.5 L4 15.5" stroke="#3a6fb8" stroke-width="2.6" stroke-linecap="round"/><path d="M9 3.5 Q12 0.5 15.5 2 L18 5.5 L16.5 7 L14 5 L12 6.5 Z" fill="#222"/></svg>
<svg style="position:absolute;left:514px;top:316px;" width="19" height="14" viewBox="0 0 19 14"><path d="M4.5 1.5 L18 1 L18 12.5 L1 10.5 Z M9 1.3 L6.5 11.3 M13.5 1.1 L12.5 11.8 M3.2 5 L18 4.8 M1.8 8 L18 8.8" fill="none" stroke="#9a9a9a" stroke-width="0.75"/></svg>
<svg style="position:absolute;left:517px;top:337px;" width="13" height="17" viewBox="0 0 13 17"><circle cx="6.5" cy="6" r="5.5" fill="#f2f25a"/><circle cx="5" cy="4.5" r="2" fill="#fbfbc0"/><rect x="4" y="11" width="5" height="4" fill="#c8c8c8"/><rect x="4.5" y="15" width="4" height="1.5" fill="#888"/></svg>
<svg style="position:absolute;left:515px;top:359px;" width="17" height="15" viewBox="0 0 17 15"><ellipse cx="10.5" cy="6" rx="6.5" ry="5" transform="rotate(-25 10.5 6)" fill="#111"/><circle cx="6" cy="9" r="5.2" fill="#c21010"/><circle cx="4.5" cy="7.5" r="1.6" fill="#f2a0a0"/></svg>
<svg style="position:absolute;left:515px;top:378px;" width="17" height="17" viewBox="0 0 17 17"><circle cx="5" cy="4" r="3.5" fill="#dde6f0" stroke="#333" stroke-width="1"/><circle cx="11.5" cy="4" r="3.5" fill="#dde6f0" stroke="#333" stroke-width="1"/><circle cx="5" cy="4" r="1.3" fill="#333"/><circle cx="11.5" cy="4" r="1.3" fill="#333"/><rect x="1" y="8" width="11" height="7" fill="#111"/><path d="M12 10 L16 8 V15 L12 13 Z" fill="#111"/><rect x="2.5" y="15" width="2" height="2" fill="#111"/></svg>
<svg style="position:absolute;left:515px;top:398px;" width="17" height="17" viewBox="0 0 17 17"><path d="M3 2 Q1 6 4 7 L10 13 L13 10 L7 4 Q6 1 2 1 L4 3.5 Z" fill="#f4f4f4" stroke="#666" stroke-width="0.8"/><circle cx="9.5" cy="9.5" r="5" fill="#a9c4e0" stroke="#777" stroke-width="0.8" stroke-dasharray="2 1"/><path d="M6 14 L14 6" stroke="#e8c84a" stroke-width="2.6"/></svg>
<div style="left:539px;top:294.0px;font-size:11.1px;line-height:16px;color:#111;transform:scaleX(0.99);transform-origin:0 50%;white-space:nowrap;">General</div>
<div style="left:539px;top:315.3px;font-size:11.1px;line-height:16px;color:#111;transform:scaleX(0.99);transform-origin:0 50%;white-space:nowrap;">Terrain</div>
<div style="left:539px;top:337.0px;font-size:11.1px;line-height:16px;color:#111;transform:scaleX(0.99);transform-origin:0 50%;white-space:nowrap;">Lights</div>
<div style="left:539px;top:357.5px;font-size:11.1px;line-height:16px;color:#111;transform:scaleX(0.99);transform-origin:0 50%;white-space:nowrap;">Shadow</div>
<div style="left:539px;top:378.0px;font-size:11.1px;line-height:16px;color:#111;transform:scaleX(0.99);transform-origin:0 50%;white-space:nowrap;">Camera &amp; Skybox</div>
<div style="left:539px;top:399.0px;font-size:11.1px;line-height:16px;color:#111;transform:scaleX(0.99);transform-origin:0 50%;white-space:nowrap;">Advanced</div>
<svg style="position:absolute;left:809px;top:291px;" width="13" height="13" viewBox="0 0 13 13"><rect x="0.5" y="0.5" width="12" height="12" fill="#fff" stroke="#a9a9a9"/><path d="M2.9 6.8 L5.5 10.1 L10.4 2.3" fill="none" stroke="#000" stroke-width="1.6"/></svg>
<div style="left:826px;top:292.0px;font-size:11px;line-height:15px;color:#000;font-weight:bold;white-space:nowrap;">Terrain</div>
<div style="left:809px;top:308px;width:332px;height:177px;border:1px solid #d6d6d6;border-radius:2px;"></div>
<div style="left:819px;top:323.1px;font-size:10.6px;line-height:15px;color:#1a1a1a;transform:scaleX(0.95);transform-origin:0 50%;white-space:nowrap;">Type</div>
<div style="left:819px;top:349.5px;font-size:10.6px;line-height:15px;color:#1a1a1a;transform:scaleX(0.95);transform-origin:0 50%;white-space:nowrap;">Elevation</div>
<div style="left:819px;top:376.8px;font-size:10.6px;line-height:15px;color:#1a1a1a;transform:scaleX(0.95);transform-origin:0 50%;white-space:nowrap;">Vertical scale</div>
<div style="left:819px;top:404.5px;font-size:10.6px;line-height:15px;color:#1a1a1a;transform:scaleX(0.95);transform-origin:0 50%;white-space:nowrap;">Tile resolution</div>
<div style="left:819px;top:430.3px;font-size:10.6px;line-height:15px;color:#1a1a1a;transform:scaleX(0.95);transform-origin:0 50%;white-space:nowrap;">Skirt height</div>
<div style="left:819px;top:456.8px;font-size:10.6px;line-height:15px;color:#1a1a1a;transform:scaleX(0.95);transform-origin:0 50%;white-space:nowrap;">Offset</div>
<div style="left:927px;top:318px;width:203px;height:21px;background:linear-gradient(#fdfdfd,#ececec);border:1px solid #bcbcbc;border-radius:3px;"></div>
<svg style="position:absolute;left:1115px;top:326.5px;" width="8" height="5" viewBox="0 0 8 5"><path d="M0 0 H8 L4 4 Z" fill="#555"/></svg>
<div style="left:931px;top:322.2px;font-size:10.6px;line-height:15px;color:#1a1a1a;transform:scaleX(0.95);transform-origin:0 50%;white-space:nowrap;">DEM (Raster Layer)</div>
<div style="left:927px;top:345px;width:203px;height:22px;background:linear-gradient(#fdfdfd,#ececec);border:1px solid #bcbcbc;border-radius:3px;"></div>
<svg style="position:absolute;left:1115px;top:354.0px;" width="8" height="5" viewBox="0 0 8 5"><path d="M0 0 H8 L4 4 Z" fill="#555"/></svg>
<svg style="position:absolute;left:934px;top:350px;" width="12" height="12" viewBox="0 0 12 12"><rect x="0.00" y="0.00" width="4.10" height="4.10" fill="#2d4160"/><rect x="4.00" y="0.00" width="4.10" height="4.10" fill="#a9c3df"/><rect x="8.00" y="0.00" width="4.10" height="4.10" fill="#2d4160"/><rect x="0.00" y="4.00" width="4.10" height="4.10" fill="#a9c3df"/><rect x="4.00" y="4.00" width="4.10" height="4.10" fill="#2d4160"/><rect x="8.00" y="4.00" width="4.10" height="4.10" fill="#6f8fb0"/><rect x="0.00" y="8.00" width="4.10" height="4.10" fill="#2d4160"/><rect x="4.00" y="8.00" width="4.10" height="4.10" fill="#a9c3df"/><rect x="8.00" y="8.00" width="4.10" height="4.10" fill="#cfdcea"/></svg>
<div style="left:949px;top:349.7px;font-size:10.6px;line-height:15px;color:#1a1a1a;transform:scaleX(0.95);transform-origin:0 50%;white-space:nowrap;">DEM_092G</div>
<div style="left:927px;top:374px;width:203px;height:19px;background:#fff;border:1px solid #bcbcbc;border-radius:3px;"></div>
<div style="left:1116px;top:375px;width:1px;height:17px;background:#d8d8d8;"></div>
<div style="left:1117px;top:375px;width:12px;height:17px;background:linear-gradient(#fafafa,#ededed);border-radius:0 2px 2px 0;"></div>
<svg style="position:absolute;left:1119px;top:377.5px;" width="9" height="12" viewBox="0 0 9 12"><path d="M0.5 4.5 L4.5 0.5 L8.5 4.5 Z" fill="#555"/><path d="M0.5 7.5 L4.5 11.5 L8.5 7.5 Z" fill="#555"/></svg>
<svg style="position:absolute;left:1093px;top:379.0px;" width="13" height="9" viewBox="0 0 13 9"><path d="M4 0.5 H12.5 V8.5 H4 L0.5 4.5 Z" fill="#b4b4b4"/><path d="M6 2.5 L10 6.5 M10 2.5 L6 6.5" stroke="#fff" stroke-width="1.2"/></svg>
<div style="left:931px;top:377.2px;font-size:10.6px;line-height:15px;color:#1a1a1a;transform:scaleX(0.95);transform-origin:0 50%;white-space:nowrap;">2.50</div>
<div style="left:927px;top:401px;width:203px;height:18px;background:#fff;border:1px solid #bcbcbc;border-radius:3px;"></div>
<div style="left:1116px;top:402px;width:1px;height:16px;background:#d8d8d8;"></div>
<div style="left:1117px;top:402px;width:12px;height:16px;background:linear-gradient(#fafafa,#ededed);border-radius:0 2px 2px 0;"></div>
<svg style="position:absolute;left:1119px;top:404.0px;" width="9" height="12" viewBox="0 0 9 12"><path d="M0.5 4.5 L4.5 0.5 L8.5 4.5 Z" fill="#555"/><path d="M0.5 7.5 L4.5 11.5 L8.5 7.5 Z" fill="#555"/></svg>
<div style="left:931px;top:403.7px;font-size:10.6px;line-height:15px;color:#1a1a1a;transform:scaleX(0.95);transform-origin:0 50%;white-space:nowrap;">16 px</div>
<div style="left:927px;top:428px;width:203px;height:18px;background:#fff;border:1px solid #bcbcbc;border-radius:3px;"></div>
<div style="left:1116px;top:429px;width:1px;height:16px;background:#d8d8d8;"></div>
<div style="left:1117px;top:429px;width:12px;height:16px;background:linear-gradient(#fafafa,#ededed);border-radius:0 2px 2px 0;"></div>
<svg style="position:absolute;left:1119px;top:431.0px;" width="9" height="12" viewBox="0 0 9 12"><path d="M0.5 4.5 L4.5 0.5 L8.5 4.5 Z" fill="#555"/><path d="M0.5 7.5 L4.5 11.5 L8.5 7.5 Z" fill="#555"/></svg>
<div style="left:931px;top:430.7px;font-size:10.6px;line-height:15px;color:#1a1a1a;transform:scaleX(0.95);transform-origin:0 50%;white-space:nowrap;">10.0 map units</div>
<div style="left:927px;top:454px;width:203px;height:18px;background:#fff;border:1px solid #bcbcbc;border-radius:3px;"></div>
<div style="left:1116px;top:455px;width:1px;height:16px;background:#d8d8d8;"></div>
<div style="left:1117px;top:455px;width:12px;height:16px;background:linear-gradient(#fafafa,#ededed);border-radius:0 2px 2px 0;"></div>
<svg style="position:absolute;left:1119px;top:457.0px;" width="9" height="12" viewBox="0 0 9 12"><path d="M0.5 4.5 L4.5 0.5 L8.5 4.5 Z" fill="#555"/><path d="M0.5 7.5 L4.5 11.5 L8.5 7.5 Z" fill="#555"/></svg>
<div style="left:931px;top:456.7px;font-size:10.6px;line-height:15px;color:#1a1a1a;transform:scaleX(0.95);transform-origin:0 50%;white-space:nowrap;">0.00</div>
<svg style="position:absolute;left:809px;top:491px;" width="13" height="13" viewBox="0 0 13 13"><rect x="0.5" y="0.5" width="12" height="12" fill="#fff" stroke="#a9a9a9"/></svg>
<div style="left:827px;top:491.5px;font-size:11px;line-height:15px;color:#000;font-weight:bold;white-space:nowrap;">Terrain Shading</div>
<div style="left:809px;top:507px;width:332px;height:96px;border:1px solid #d6d6d6;border-radius:2px;"></div>
<div style="left:819px;top:521.8px;font-size:10.6px;line-height:15px;color:#9a9a9a;transform:scaleX(0.95);transform-origin:0 50%;white-space:nowrap;">Ambient</div>
<div style="left:819px;top:548.0px;font-size:10.6px;line-height:15px;color:#9a9a9a;transform:scaleX(0.95);transform-origin:0 50%;white-space:nowrap;">Specular</div>
<div style="left:819px;top:574.0px;font-size:10.6px;line-height:15px;color:#9a9a9a;transform:scaleX(0.95);transform-origin:0 50%;white-space:nowrap;">Shininess</div>
<div style="left:866px;top:518px;width:246px;height:20px;background:linear-gradient(#fafafa,#ececec);border:1px solid #cfcfcf;border-radius:3px;"></div>
<div style="left:871px;top:521px;width:237px;height:14px;background:#b3b3b3;border-radius:3px;"></div>
<div style="left:1113px;top:518px;width:11px;height:20px;background:linear-gradient(#fafafa,#ececec);border:1px solid #cfcfcf;border-radius:2px;"></div>
<svg style="position:absolute;left:1114.5px;top:526.5px;" width="8" height="5" viewBox="0 0 8 5"><path d="M0 0 H8 L4 4 Z" fill="#9a9a9a"/></svg>
<div style="left:866px;top:544px;width:246px;height:21px;background:linear-gradient(#ffffff,#efefef);border:1px solid #cfcfcf;border-radius:3px;"></div>
<div style="left:1113px;top:544px;width:11px;height:21px;background:linear-gradient(#fafafa,#ececec);border:1px solid #cfcfcf;border-radius:2px;"></div>
<svg style="position:absolute;left:1114.5px;top:553px;" width="8" height="5" viewBox="0 0 8 5"><path d="M0 0 H8 L4 4 Z" fill="#9a9a9a"/></svg>
<div style="left:866px;top:571px;width:264px;height:20px;background:#f0f0f0;border:1px solid #c8c8c8;border-radius:3px;"></div>
<div style="left:1116px;top:572px;width:1px;height:18px;background:#d8d8d8;"></div>
<div style="left:1117px;top:572px;width:12px;height:18px;background:linear-gradient(#fafafa,#ededed);border-radius:0 2px 2px 0;"></div>
<svg style="position:absolute;left:1119px;top:575.0px;" width="9" height="12" viewBox="0 0 9 12"><path d="M0.5 4.5 L4.5 0.5 L8.5 4.5 Z" fill="#b0b0b0"/><path d="M0.5 7.5 L4.5 11.5 L8.5 7.5 Z" fill="#cfcfcf"/></svg>
<div style="left:870px;top:574.7px;font-size:10.6px;line-height:15px;color:#a0a0a0;transform:scaleX(0.95);transform-origin:0 50%;white-space:nowrap;">0.00</div>
<div style="left:822px;top:685px;width:75px;height:20px;background:linear-gradient(#fbfbfb,#e9e9e9);border:1px solid #adadad;border-radius:2px;"></div>
<div style="left:659.5px;top:687.5px;width:400px;text-align:center;font-size:10.6px;line-height:15px;color:#1a1a1a;white-space:nowrap;">OK</div>
<div style="left:903px;top:685px;width:76px;height:20px;background:linear-gradient(#fbfbfb,#e9e9e9);border:1px solid #adadad;border-radius:2px;"></div>
<div style="left:741.0px;top:687.5px;width:400px;text-align:center;font-size:10.6px;line-height:15px;color:#1a1a1a;white-space:nowrap;">Cancel</div>
<div style="left:984px;top:685px;width:76px;height:20px;background:linear-gradient(#fbfbfb,#e9e9e9);border:1px solid #adadad;border-radius:2px;"></div>
<div style="left:822.0px;top:687.5px;width:400px;text-align:center;font-size:10.6px;line-height:15px;color:#1a1a1a;white-space:nowrap;">Apply</div>
<div style="left:1066px;top:685px;width:75px;height:20px;background:linear-gradient(#fbfbfb,#e9e9e9);border:1px solid #adadad;border-radius:2px;"></div>
<div style="left:903.5px;top:687.5px;width:400px;text-align:center;font-size:10.6px;line-height:15px;color:#1a1a1a;white-space:nowrap;">Help</div>
<div style="left:355px;top:73px;width:34px;height:32px;border:4px solid #ff0000;"></div>
<div style="left:400px;top:73px;width:34px;height:32px;background:#fff;border:4px solid #ff0000;"></div>
<div style="left:217px;top:74.0px;width:400px;text-align:center;font-size:22.5px;line-height:31px;color:#000;transform:scaleX(0.8);transform-origin:0 50%;white-space:nowrap;transform-origin:50% 50%;">A</div>
<div style="left:510px;top:305px;width:288px;height:32px;border:4px solid #ffc000;"></div>
<div style="left:464px;top:305px;width:34px;height:32px;background:#fff;border:4px solid #ffc000;"></div>
<div style="left:281.5px;top:306.0px;width:400px;text-align:center;font-size:22.5px;line-height:31px;color:#000;transform:scaleX(0.8);transform-origin:0 50%;white-space:nowrap;transform-origin:50% 50%;">B</div>
<div style="left:816px;top:312px;width:326px;height:86px;border:4px solid #70ad47;"></div>
<div style="left:1159px;top:328px;width:34px;height:32px;background:#fff;border:4px solid #70ad47;"></div>
<div style="left:976px;top:329.0px;width:400px;text-align:center;font-size:22.5px;line-height:31px;color:#000;transform:scaleX(0.8);transform-origin:0 50%;white-space:nowrap;transform-origin:50% 50%;">C</div>
</body></html>
